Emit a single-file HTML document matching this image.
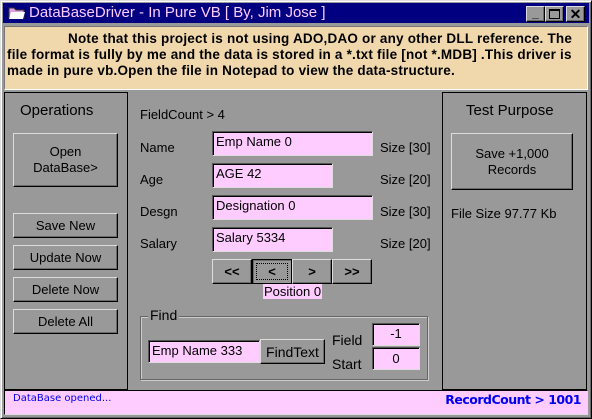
<!DOCTYPE html>
<html><head><meta charset="utf-8"><style>
*{box-sizing:border-box;margin:0;padding:0}
body{width:592px;height:419px;background:#999;font-family:"Liberation Sans",sans-serif;font-size:13px;color:#000;position:relative;overflow:hidden}
.a{position:absolute}
.win{left:0;top:0;width:592px;height:419px;border:1px solid #dfdfdf;border-right-color:#000;border-bottom-color:#000;box-shadow:inset 1px 1px 0 #fff,inset -1px -1px 0 #666}
.btn{position:absolute;background:#999;border:1px solid;border-color:#dcdcdc #000 #000 #dcdcdc;box-shadow:inset -1px -1px 0 #6a6a6a;display:flex;align-items:center;justify-content:center;text-align:center;line-height:16px}
.tb{position:absolute;background:#ffccff;border:1px solid;border-color:#555 #ddd #ddd #555;box-shadow:inset 1px 1px 0 #000;padding:1px 0 0 3px;line-height:18px}
.panel{position:absolute;border:1px solid #000;border-right-color:#000}
.lbl{position:absolute;line-height:16px}
</style></head><body>
<div class="a win"></div>
<div class="a" style="left:3px;top:3px;width:586px;height:20px;background:#000080"></div>
<svg class="a" style="left:8px;top:6px" width="18" height="14"><path d="M1 2h5l2 2h8v8H1z" fill="#e0a0e0" stroke="#333"/><path d="M3 6h14l-2 7H1z" fill="#fff"/></svg>
<div class="a" style="left:29px;top:4px;font-size:15px;color:#ffccff;line-height:18px">DataBaseDriver - In Pure VB [ By, Jim Jose ]</div>
<div class="btn" style="left:526px;top:6px;width:19px;height:16px;font-weight:bold;font-size:12px;align-items:flex-end">_</div>
<div class="btn" style="left:545px;top:6px;width:19px;height:16px"><div style="width:11px;height:10px;border:1px solid #000;border-top-width:2px"></div></div>
<div class="btn" style="left:566px;top:6px;width:19px;height:16px;font-weight:bold;font-size:14px">✕</div>
<div class="a" style="left:4px;top:26px;width:584px;height:64px;background:#f0d8ac;border:1px solid;border-color:#777 #fff #fff #777;font-weight:bold;font-size:13.5px;line-height:16px;padding:4px 0 0 2px;white-space:nowrap;font-family:'Liberation Sans',sans-serif;letter-spacing:0.2px">
<div style="padding-left:61px">Note that this project is not using ADO,DAO or any other DLL reference. The</div>
<div>file format is fully by me and the data is stored in a *.txt file [not *.MDB] .This driver is</div>
<div>made in pure vb.Open the file in Notepad to view the data-structure.</div></div>
<div class="panel" style="left:4px;top:92px;width:124px;height:298px"></div>
<div class="panel" style="left:442px;top:92px;width:145px;height:298px"></div>
<div class="lbl" style="left:20px;top:103px;font-size:15px">Operations</div>
<div class="btn" style="left:13px;top:133px;width:105px;height:54px">Open<br>DataBase&gt;</div>
<div class="btn" style="left:13px;top:213px;width:105px;height:25px">Save New</div>
<div class="btn" style="left:13px;top:245px;width:105px;height:25px">Update Now</div>
<div class="btn" style="left:13px;top:277px;width:105px;height:25px">Delete Now</div>
<div class="btn" style="left:13px;top:309px;width:105px;height:25px">Delete All</div>
<div class="lbl" style="left:140px;top:107px">FieldCount &gt; 4</div>
<div class="lbl" style="left:140px;top:140px">Name</div>
<div class="lbl" style="left:140px;top:172px">Age</div>
<div class="lbl" style="left:140px;top:204px">Desgn</div>
<div class="lbl" style="left:140px;top:236px">Salary</div>
<div class="tb" style="left:212px;top:131px;width:161px;height:25px">Emp Name 0</div>
<div class="tb" style="left:212px;top:163px;width:121px;height:25px">AGE 42</div>
<div class="tb" style="left:212px;top:195px;width:161px;height:25px">Designation 0</div>
<div class="tb" style="left:212px;top:227px;width:121px;height:25px">Salary 5334</div>
<div class="lbl" style="left:380px;top:140px">Size [30]</div>
<div class="lbl" style="left:380px;top:172px">Size [20]</div>
<div class="lbl" style="left:380px;top:204px">Size [30]</div>
<div class="lbl" style="left:380px;top:236px">Size [20]</div>
<div class="btn" style="left:212px;top:259px;width:40px;height:25px;font-weight:bold">&lt;&lt;</div>
<div class="btn" style="left:252px;top:259px;width:40px;height:25px;font-weight:bold;border:1px solid #000;box-shadow:inset 1px 1px 0 #6a6a6a"><div style="border:1px dotted #000;width:32px;height:17px;line-height:15px">&lt;</div></div>
<div class="btn" style="left:292px;top:259px;width:40px;height:25px;font-weight:bold">&gt;</div>
<div class="btn" style="left:332px;top:259px;width:40px;height:25px;font-weight:bold">&gt;&gt;</div>
<div class="lbl" style="left:263px;top:284px;width:59px;height:15px;background:#ffccff;text-align:center;line-height:15px">Position 0</div>
<div class="a" style="left:140px;top:316px;width:288px;height:64px;border:1px solid #666;box-shadow:1px 1px 0 #ccc,inset 1px 1px 0 #ccc"></div>
<div class="lbl" style="left:148px;top:307px;background:#999;padding:0 2px;font-size:14px">Find</div>
<div class="tb" style="left:148px;top:340px;width:112px;height:23px;line-height:17px">Emp Name 333</div>
<div class="btn" style="left:260px;top:339px;width:65px;height:25px;font-size:14px">FindText</div>
<div class="lbl" style="left:332px;top:332px;font-size:14px">Field</div>
<div class="lbl" style="left:332px;top:356px;font-size:14px">Start</div>
<div class="tb" style="left:372px;top:323px;width:48px;height:23px;text-align:center;padding:0;line-height:19px">-1</div>
<div class="tb" style="left:372px;top:347px;width:48px;height:23px;text-align:center;padding:0;line-height:21px">0</div>
<div class="lbl" style="left:466px;top:103px;font-size:15px">Test Purpose</div>
<div class="btn" style="left:451px;top:133px;width:122px;height:57px">Save +1,000<br>Records</div>
<div class="lbl" style="left:451px;top:206px">File Size 97.77 Kb</div>
<div class="a" style="left:4px;top:390px;width:584px;height:25px;background:#ffccff;border:1px solid;border-color:#000 #ddd #ddd #000"></div>
<div class="lbl" style="left:13px;top:391px;font-size:10px;color:#0000ee;font-family:'DejaVu Sans',sans-serif">DataBase opened...</div>
<div class="lbl" style="right:11px;top:392px;font-size:12.5px;color:#0000ee;font-weight:bold;font-family:'DejaVu Sans',sans-serif;letter-spacing:-0.5px">RecordCount &gt; 1001</div>
</body></html>
